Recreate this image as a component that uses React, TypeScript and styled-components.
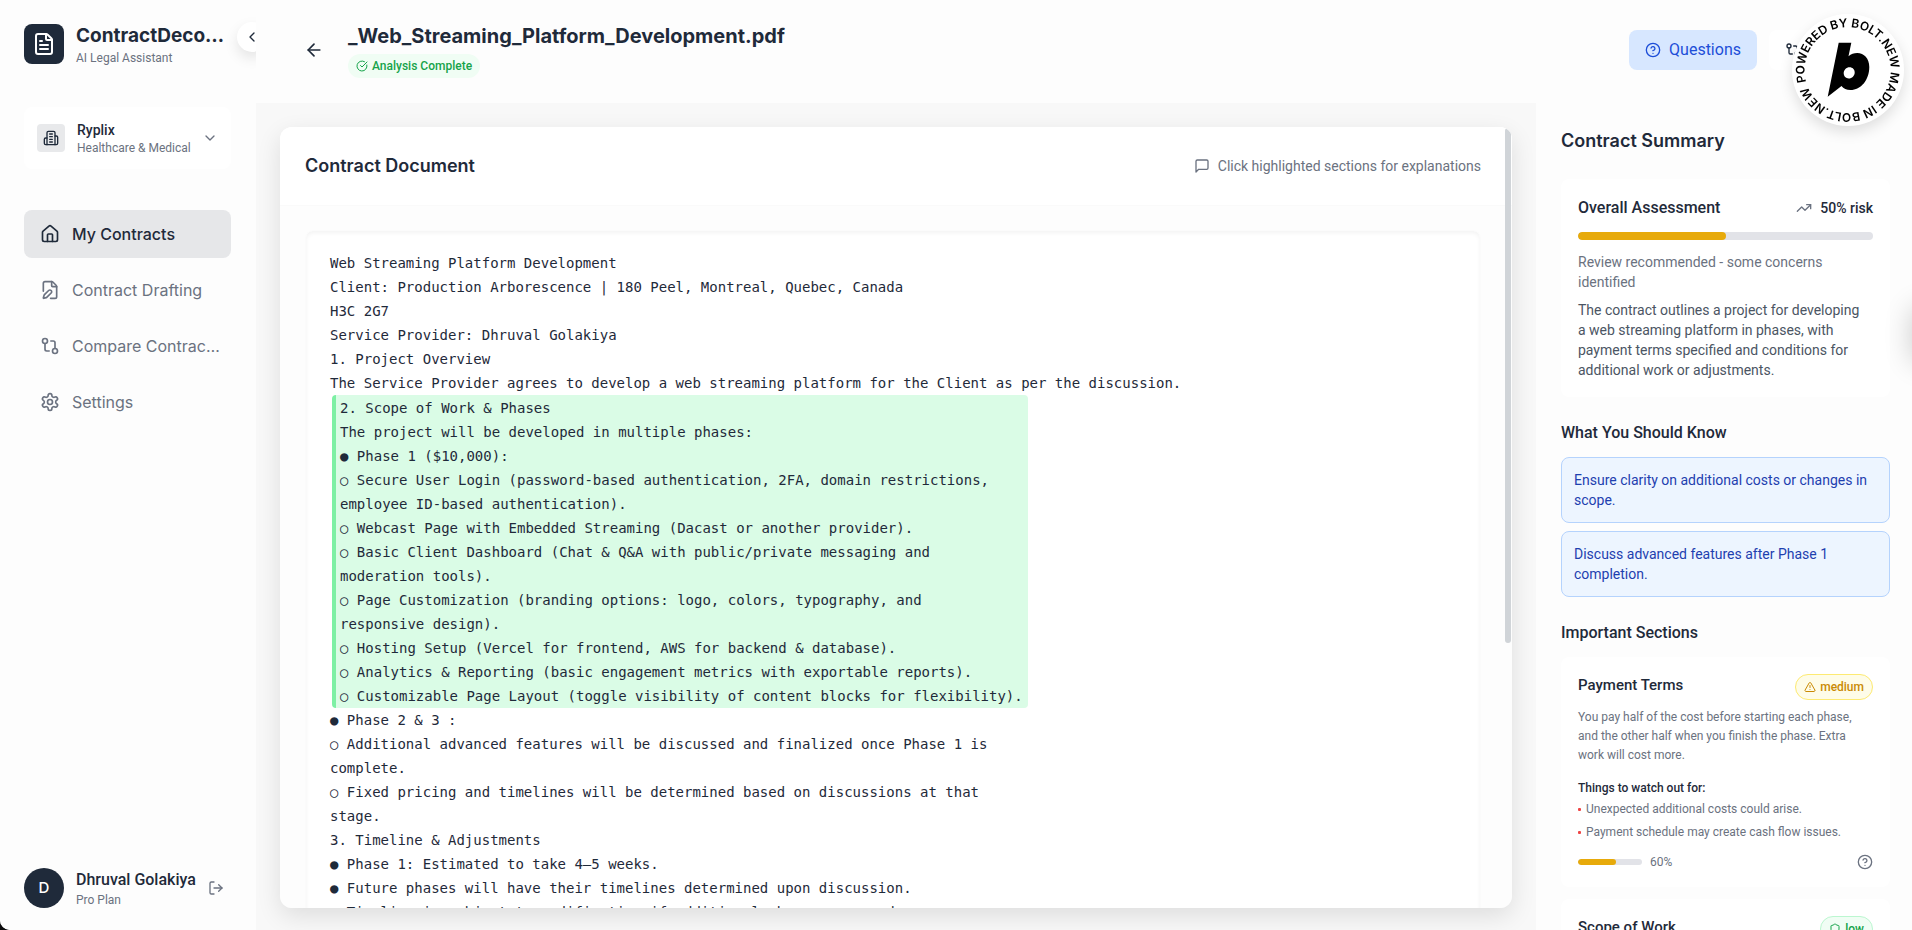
import React from 'react';
import styled, { createGlobalStyle } from 'styled-components';
import {
  ArrowLeft, ChevronDown, ChevronLeft, CircleCheckBig, CircleHelp, FilePen, FileText,
  GitCompare, House, LogOut, Shield, TrendingUp, TriangleAlert,
} from 'lucide-react';

const ink = '#1f2a3a';
const muted = '#6b7280';
const surface = '#fdfdfd';
const display = 'Inter, "Liberation Sans", sans-serif';

const GlobalStyle = createGlobalStyle`
  *, *::before, *::after { box-sizing: border-box; }
  html { background: #0b0b0d; }
  body { margin: 0; font-family: Roboto, "Liberation Sans", sans-serif; color: ${ink}; }
  h1, h2, h3, h4, p, ul, pre { margin: 0; padding: 0; }
  button { font: inherit; color: inherit; border: 0; background: none; padding: 0; cursor: pointer; }
  a { color: inherit; text-decoration: none; }
  svg { display: block; flex: none; }
`;

const Page = styled.div`
  display: flex;
  height: 100vh;
  overflow: hidden;
  background: #f8f8f8;
  border-bottom-left-radius: 10px;
`;

/* Sidebar */
const Sidebar = styled.aside`
  position: relative;
  flex: 0 0 256px;
  min-width: 0;
  display: flex;
  flex-direction: column;
  padding: 22px 25px 22px 24px;
  background: ${surface};
`;
const Brand = styled.div`
  display: flex;
  align-items: center;
  gap: 12px;
  margin-bottom: 41px;
`;
const Logo = styled.div`
  display: grid;
  place-items: center;
  flex: none;
  width: 40px;
  height: 40px;
  border-radius: 8px;
  background: ${ink};
  color: #fff;
`;
const BrandText = styled.div`
  flex: 1;
  min-width: 0;
`;
const BrandName = styled.h2`
  font: 700 19px/28px ${display};
  overflow: hidden;
  white-space: nowrap;
  text-overflow: ellipsis;
`;
const Small = styled.span`
  display: block;
  font-size: 12px;
  line-height: 16px;
  color: ${muted};
  white-space: nowrap;
`;
const CollapseButton = styled.button`
  position: absolute;
  top: 22px;
  left: 237px;
  display: grid;
  place-items: center;
  width: 30px;
  height: 30px;
  border-radius: 50%;
  background: #fff;
  box-shadow: 0 6px 14px rgba(0, 0, 0, 0.1);
`;
const OrgButton = styled.button`
  display: flex;
  align-items: center;
  gap: 12px;
  height: 62px;
  padding: 0 13px;
  border-radius: 8px;
  background: #fff;
  text-align: left;
`;
const OrgIcon = styled.span`
  display: grid;
  place-items: center;
  flex: none;
  width: 28px;
  height: 28px;
  border-radius: 4px;
  background: #e8e9eb;
`;
const OrgText = styled.span`
  flex: 1;
  min-width: 0;
`;
const OrgName = styled.span`
  display: block;
  font-size: 14px;
  line-height: 20px;
  font-weight: 500;
`;
const Nav = styled.nav`
  display: flex;
  flex-direction: column;
  gap: 8px;
  margin-top: 41px;
`;
const NavLink = styled.a<{ $active?: boolean }>`
  display: flex;
  align-items: center;
  gap: 12px;
  height: 48px;
  padding: 0 12px 0 16px;
  border-radius: 8px;
  font: ${p => (p.$active ? 500 : 400)} 16px/24px ${display};
  white-space: nowrap;
  color: ${p => (p.$active ? ink : muted)};
  background: ${p => (p.$active ? '#e6e7e9' : 'transparent')};
`;
const Account = styled.div`
  display: flex;
  align-items: center;
  gap: 12px;
  margin-top: auto;
`;
const Avatar = styled.div`
  display: grid;
  place-items: center;
  flex: none;
  width: 40px;
  height: 40px;
  border-radius: 50%;
  background: ${ink};
  color: #fff;
  font: 500 15px/20px ${display};
`;
const AccountName = styled.p`
  font-size: 16px;
  line-height: 24px;
  font-weight: 500;
  white-space: nowrap;
`;
const SignOut = styled.button`
  color: ${muted};
`;

/* Workspace */
const Workspace = styled.div`
  position: relative;
  flex: 1;
  min-width: 0;
  display: flex;
  flex-direction: column;
`;
const TopBar = styled.header`
  display: flex;
  align-items: center;
  justify-content: space-between;
  height: 103px;
  padding: 0 22px 3px 40px;
  background: ${surface};
`;
const FileHeading = styled.div`
  display: flex;
  align-items: center;
  gap: 16px;
`;
const FileTitle = styled.h1`
  font: 700 20px/28px ${display};
`;
const Status = styled.span`
  display: inline-flex;
  align-items: center;
  gap: 4px;
  height: 24px;
  margin-top: 4px;
  padding: 0 8px;
  border-radius: 12px;
  background: #f0fdf4;
  color: #16a34a;
  font-size: 12px;
  line-height: 16px;
  font-weight: 500;
`;
const Actions = styled.div`
  display: flex;
  gap: 12px;
`;
const ActionButton = styled.button<{ $primary?: boolean }>`
  display: flex;
  align-items: center;
  gap: 8px;
  height: 40px;
  padding: 0 16px;
  border-radius: 8px;
  font-size: 16px;
  line-height: 24px;
  color: ${p => (p.$primary ? '#1d4ed8' : ink)};
  background: ${p => (p.$primary ? '#d7e7ff' : '#fff')};
`;
const BackButton = styled.button`
  padding: 8px;
`;
const Body = styled.div`
  flex: 1;
  min-height: 0;
  display: flex;
`;
const DocumentArea = styled.main`
  flex: 1;
  min-width: 0;
  padding: 24px 24px 22px;
`;
const DocumentCard = styled.section`
  position: relative;
  height: 100%;
  overflow: hidden;
  border-radius: 12px;
  background: ${surface};
`;
const CardShadow = styled.div`
  height: 100%;
  border-radius: 12px;
  box-shadow: 0 8px 24px rgba(0, 0, 0, 0.11);
`;
const CardHeader = styled.div`
  display: flex;
  align-items: center;
  justify-content: space-between;
  height: 79px;
  padding: 0 31px 0 25px;
  background: #fff;
  border-bottom: 1px solid #fafafa;
`;
const PanelTitle = styled.h2`
  font: 600 18px/28px ${display};
`;
const Hint = styled.p`
  display: flex;
  align-items: center;
  gap: 8px;
  font-size: 14px;
  line-height: 20px;
  color: ${muted};
`;
const Sheet = styled.div`
  margin: 24px 31px 24px 25px;
  padding: 20px 24px 24px;
  border: 1px solid #fbfbfb;
  border-radius: 8px;
  background: #fff;
  box-shadow: inset 0 2px 4px rgba(0, 0, 0, 0.05);
`;
const DocText = styled.pre`
  font: 14px/24px "DejaVu Sans Mono", monospace;
`;
const Highlight = styled.mark`
  display: block;
  width: max-content;
  margin-left: 2px;
  padding: 1px 5px 0 4px;
  border-left: 4px solid #7df0a4;
  border-radius: 4px;
  background: #dafce6;
  color: inherit;
  cursor: pointer;
`;
const ScrollThumb = styled.div`
  position: absolute;
  top: 1px;
  right: 1px;
  width: 6px;
  height: 66%;
  border-radius: 3px;
  background: #d0d4d8;
`;

/* Summary panel */
const Summary = styled.aside`
  flex: 0 0 376px;
  overflow: hidden;
  padding: 24px 22px 0 25px;
  background: ${surface};
`;
const SectionTitle = styled.h3`
  margin: 24px 0 12px;
  font-size: 16px;
  line-height: 24px;
  font-weight: 500;
`;
const Card = styled.section`
  padding: 17px;
  border-radius: 8px;
  background: #fff;
  & + & { margin-top: 12px; }
`;
const AssessmentCard = styled(Card)`
  margin-top: 24px;
`;
const Row = styled.div<{ $top?: boolean }>`
  display: flex;
  align-items: ${p => (p.$top ? 'flex-start' : 'center')};
  justify-content: space-between;
`;
const AssessmentTitle = styled.h3`
  font-size: 16px;
  line-height: 24px;
  font-weight: 500;
`;
const Risk = styled.span`
  display: flex;
  align-items: center;
  gap: 8px;
  font-size: 14px;
  line-height: 20px;
  font-weight: 500;
  svg { color: ${muted}; }
`;
const Track = styled.div<{ $slim?: boolean }>`
  overflow: hidden;
  width: ${p => (p.$slim ? '64px' : '100%')};
  height: ${p => (p.$slim ? '6px' : '8px')};
  margin: ${p => (p.$slim ? '0' : '12px 0')};
  border-radius: 4px;
  background: #e2e3e8;
`;
const Fill = styled.div`
  height: 100%;
  border-radius: 4px;
  background: #e7aa0b;
`;
const Note = styled.p<{ $dark?: boolean }>`
  padding-right: 8px;
  font-size: 14px;
  line-height: 20px;
  color: ${p => (p.$dark ? '#4b5563' : muted)};
  & + & { margin-top: 8px; }
`;
const TipList = styled.ul`
  display: flex;
  flex-direction: column;
  gap: 8px;
  list-style: none;
`;
const Tip = styled.li`
  padding: 12px;
  border: 1px solid #b5d3fd;
  border-radius: 8px;
  background: #edf5ff;
  color: #1e40af;
  font-size: 14px;
  line-height: 20px;
`;
const TermTitle = styled.h4`
  font-size: 15px;
  line-height: 22px;
  font-weight: 500;
`;
const Level = styled.span<{ $low?: boolean }>`
  display: flex;
  align-items: center;
  gap: 4px;
  height: 26px;
  padding: 0 8px;
  border: 1px solid ${p => (p.$low ? '#bbf7d0' : '#fdea72')};
  border-radius: 13px;
  background: ${p => (p.$low ? '#f0fdf4' : '#fefce8')};
  color: ${p => (p.$low ? '#16a34a' : '#ca8a04')};
  font-size: 12px;
  line-height: 16px;
  font-weight: 500;
`;
const TermText = styled.p`
  margin-top: 8px;
  font-size: 12px;
  line-height: 19px;
  color: ${muted};
`;
const WatchTitle = styled.h5`
  margin: 13px 0 2px;
  font-size: 12px;
  line-height: 20px;
  font-weight: 500;
`;
const WatchList = styled.ul`
  display: flex;
  flex-direction: column;
  gap: 4px;
  list-style: none;
  font-size: 12px;
  line-height: 19px;
  color: ${muted};
`;
const WatchItem = styled.li`
  display: flex;
  align-items: center;
  gap: 5px;
  &::before {
    content: '';
    width: 3px;
    height: 3px;
    border-radius: 1px;
    background: #ef4444;
  }
`;
const TermFooter = styled(Row)`
  margin-top: 12px;
  color: ${muted};
`;
const Meter = styled.div`
  display: flex;
  align-items: center;
  gap: 8px;
  font-size: 12px;
  line-height: 16px;
`;

const BoltBadge = styled.a`
  position: fixed;
  top: 14px;
  right: 8px;
  width: 112px;
  height: 112px;
  border-radius: 50%;
  background: #fff;
  box-shadow: 0 6px 14px rgba(0, 0, 0, 0.12);
`;
const BoltText = styled.text`
  font: 600 12px ${display};
`;
const EdgeTab = styled.div`
  position: fixed;
  top: 303px;
  right: -40px;
  width: 40px;
  height: 56px;
  border-radius: 8px;
  box-shadow: 0 4px 28px rgba(0, 0, 0, 0.2);
`;

const stroke = { fill: 'none', stroke: 'currentColor', strokeWidth: 2, strokeLinecap: 'round', strokeLinejoin: 'round' } as const;

const BuildingIcon = () => (
  <svg width="16" height="16" viewBox="0 0 24 24" {...stroke}>
    <path d="M6 22V4a2 2 0 0 1 2-2h8a2 2 0 0 1 2 2v18Z" />
    <path d="M6 12H4a2 2 0 0 0-2 2v6a2 2 0 0 0 2 2h2M18 9h2a2 2 0 0 1 2 2v9a2 2 0 0 1-2 2h-2" />
    <path d="M10 6h4M10 10h4M10 14h4M10 18h4" />
  </svg>
);
const GearIcon = () => (
  <svg width="20" height="20" viewBox="0 0 24 24" {...stroke}>
    <path d="M12.22 2h-.44a2 2 0 0 0-2 2v.18a2 2 0 0 1-1 1.73l-.43.25a2 2 0 0 1-2 0l-.15-.08a2 2 0 0 0-2.73.73l-.22.38a2 2 0 0 0 .73 2.73l.15.1a2 2 0 0 1 1 1.72v.51a2 2 0 0 1-1 1.74l-.15.09a2 2 0 0 0-.73 2.73l.22.38a2 2 0 0 0 2.73.73l.15-.08a2 2 0 0 1 2 0l.43.25a2 2 0 0 1 1 1.73V20a2 2 0 0 0 2 2h.44a2 2 0 0 0 2-2v-.18a2 2 0 0 1 1-1.73l.43-.25a2 2 0 0 1 2 0l.15.08a2 2 0 0 0 2.73-.73l.22-.39a2 2 0 0 0-.73-2.73l-.15-.08a2 2 0 0 1-1-1.74v-.5a2 2 0 0 1 1-1.74l.15-.09a2 2 0 0 0 .73-2.73l-.22-.38a2 2 0 0 0-2.73-.73l-.15.08a2 2 0 0 1-2 0l-.43-.25a2 2 0 0 1-1-1.73V4a2 2 0 0 0-2-2z" />
    <circle cx="12" cy="12" r="3" />
  </svg>
);
const MessageIcon = () => (
  <svg width="16" height="16" viewBox="0 0 24 24" {...stroke}>
    <path d="M21 15a2 2 0 0 1-2 2H7l-4 4V5a2 2 0 0 1 2-2h14a2 2 0 0 1 2 2z" />
  </svg>
);

const intro = `Web Streaming Platform Development
Client: Production Arborescence | 180 Peel, Montreal, Quebec, Canada
H3C 2G7
Service Provider: Dhruval Golakiya
1. Project Overview
The Service Provider agrees to develop a web streaming platform for the Client as per the discussion.`;

const scope = `2. Scope of Work & Phases
The project will be developed in multiple phases:
● Phase 1 ($10,000):
○ Secure User Login (password-based authentication, 2FA, domain restrictions,
employee ID-based authentication).
○ Webcast Page with Embedded Streaming (Dacast or another provider).
○ Basic Client Dashboard (Chat & Q&A with public/private messaging and
moderation tools).
○ Page Customization (branding options: logo, colors, typography, and
responsive design).
○ Hosting Setup (Vercel for frontend, AWS for backend & database).
○ Analytics & Reporting (basic engagement metrics with exportable reports).
○ Customizable Page Layout (toggle visibility of content blocks for flexibility).`;

const rest = `● Phase 2 & 3 :
○ Additional advanced features will be discussed and finalized once Phase 1 is
complete.
○ Fixed pricing and timelines will be determined based on discussions at that
stage.
3. Timeline & Adjustments
● Phase 1: Estimated to take 4–5 weeks.
● Future phases will have their timelines determined upon discussion.
● Timeline is subject to modification if additional changes are made.`;

const tips = [
  'Ensure clarity on additional costs or changes in scope.',
  'Discuss advanced features after Phase 1 completion.',
];
const concerns = ['Unexpected additional costs could arise.', 'Payment schedule may create cash flow issues.'];

export default function App() {
  return (
    <>
      <GlobalStyle />
      <Page>
        <Sidebar>
          <Brand>
            <Logo><FileText size={24} /></Logo>
            <BrandText>
              <BrandName>ContractDecoder</BrandName>
              <Small>AI Legal Assistant</Small>
            </BrandText>
          </Brand>
          <CollapseButton aria-label="Collapse sidebar"><ChevronLeft size={16} /></CollapseButton>
          <OrgButton>
            <OrgIcon><BuildingIcon /></OrgIcon>
            <OrgText>
              <OrgName>Ryplix</OrgName>
              <Small>Healthcare &amp; Medical</Small>
            </OrgText>
            <ChevronDown size={16} color={muted} />
          </OrgButton>
          <Nav>
            <NavLink href="#contracts" $active><House size={20} />My Contracts</NavLink>
            <NavLink href="#drafting"><FilePen size={20} />Contract Drafting</NavLink>
            <NavLink href="#compare"><GitCompare size={20} />Compare Contrac…</NavLink>
            <NavLink href="#settings"><GearIcon />Settings</NavLink>
          </Nav>
          <Account>
            <Avatar>D</Avatar>
            <div>
              <AccountName>Dhruval Golakiya</AccountName>
              <Small>Pro Plan</Small>
            </div>
            <SignOut aria-label="Sign out"><LogOut size={16} /></SignOut>
          </Account>
        </Sidebar>

        <Workspace>
          <TopBar>
            <FileHeading>
              <BackButton aria-label="Back"><ArrowLeft size={20} /></BackButton>
              <div>
                <FileTitle>_Web_Streaming_Platform_Development.pdf</FileTitle>
                <Status><CircleCheckBig size={12} />Analysis Complete</Status>
              </div>
            </FileHeading>
            <Actions>
              <ActionButton $primary><CircleHelp size={16} />Questions</ActionButton>
              <ActionButton><GitCompare size={16} />Compare</ActionButton>
            </Actions>
          </TopBar>

          <Body>
            <DocumentArea>
              <CardShadow>
                <DocumentCard>
                  <CardHeader>
                    <PanelTitle>Contract Document</PanelTitle>
                    <Hint><MessageIcon />Click highlighted sections for explanations</Hint>
                  </CardHeader>
                  <Sheet>
                    <DocText>
                      {intro}
                      <Highlight>{scope}</Highlight>
                      {rest}
                    </DocText>
                  </Sheet>
                  <ScrollThumb />
                </DocumentCard>
              </CardShadow>
            </DocumentArea>

            <Summary>
              <PanelTitle>Contract Summary</PanelTitle>
              <AssessmentCard>
                <Row>
                  <AssessmentTitle>Overall Assessment</AssessmentTitle>
                  <Risk><TrendingUp size={16} />50% risk</Risk>
                </Row>
                <Track><Fill style={{ width: '50%' }} /></Track>
                <Note>Review recommended - some concerns identified</Note>
                <Note $dark>
                  The contract outlines a project for developing a web streaming platform in phases, with
                  payment terms specified and conditions for additional work or adjustments.
                </Note>
              </AssessmentCard>

              <SectionTitle>What You Should Know</SectionTitle>
              <TipList>{tips.map(t => <Tip key={t}>{t}</Tip>)}</TipList>

              <SectionTitle>Important Sections</SectionTitle>
              <Card>
                <Row $top>
                  <TermTitle>Payment Terms</TermTitle>
                  <Level><TriangleAlert size={12} />medium</Level>
                </Row>
                <TermText>
                  You pay half of the cost before starting each phase, and the other half when you finish
                  the phase. Extra work will cost more.
                </TermText>
                <WatchTitle>Things to watch out for:</WatchTitle>
                <WatchList>{concerns.map(c => <WatchItem key={c}>{c}</WatchItem>)}</WatchList>
                <TermFooter>
                  <Meter><Track $slim><Fill style={{ width: '60%' }} /></Track>60%</Meter>
                  <button aria-label="Explain payment terms"><CircleHelp size={16} /></button>
                </TermFooter>
              </Card>
              <Card>
                <Row $top>
                  <TermTitle>Scope of Work</TermTitle>
                  <Level $low><Shield size={12} />low</Level>
                </Row>
              </Card>
            </Summary>
          </Body>
        </Workspace>
      </Page>

      <EdgeTab />
      <BoltBadge href="#bolt" aria-label="Powered by Bolt.new">
        <svg width="112" height="112" viewBox="0 0 112 112">
          <path id="badge-ring" fill="none" d="M14.2 68A42.7 42.7 0 1 1 97 44.5A42.7 42.7 0 0 1 14.2 68" />
          <BoltText><textPath href="#badge-ring">POWERED BY BOLT.NEW MADE IN BOLT.NEW</textPath></BoltText>
          <path
            fillRule="evenodd"
            d="M46.700 28.700H59.300L56.500 42.300C59 40 62 39 65.200 39C72 39 77.300 44.500 77.300 53C77.300 66 69 76 58.500 76C54.500 76 51.500 74.800 49.500 72L35.700 82.700ZM57.600 53.300C54.300 53.300 51.700 56 51.700 59.300C51.700 62.200 53.900 64.400 56.700 64.400C60 64.400 62.700 61.700 62.700 58.400C62.700 55.500 60.500 53.300 57.600 53.300Z"
          />
        </svg>
      </BoltBadge>
    </>
  );
}
